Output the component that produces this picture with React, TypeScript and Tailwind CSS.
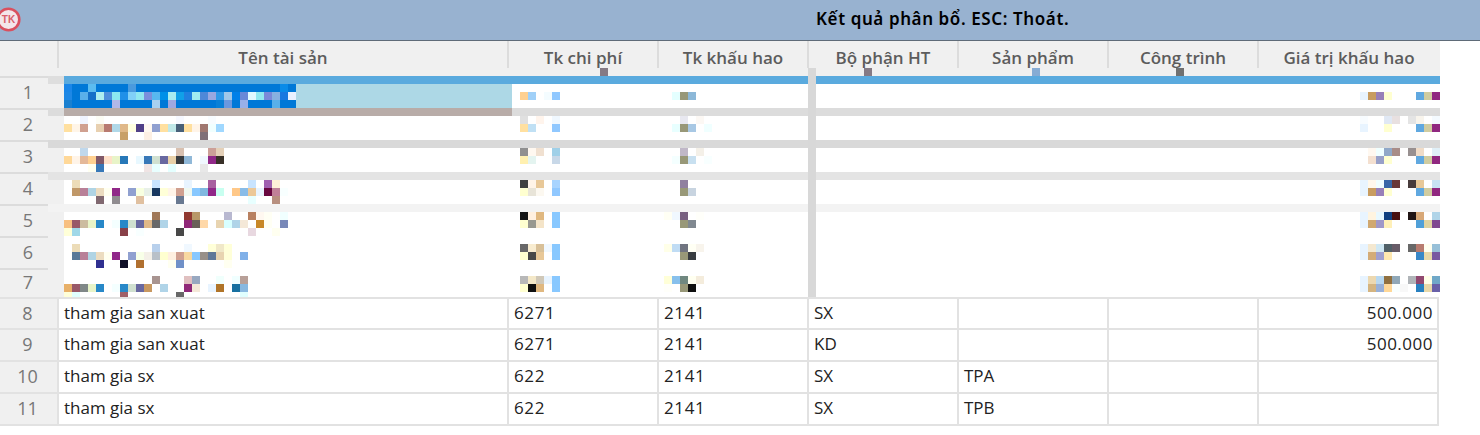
const B = '#0078d7';
const bl = (n: number) => Array(n).fill(B).join(' ');

// [x, y, colours] one run of 8px mosaic cells, "-" leaves a cell empty
const cells: [number, number, string][] = [
  // Tên tài sản
  [64, 84, `#1a86e8 ${bl(2)} #5bbcf0 ${bl(4)} #4a9ade ${bl(18)} #0a8be8 ${B}`],
  [64, 92, `#1e88e5 ${B} #5ab0ea #1570c8 #aeeef0 #4f8fdc #8ce8f0 #2090e8 #80d0f8 #90e8f0 #7a8fdc #58b8f0 #0090e8 #a8ecf0 #10a0e8 #2080e0 #a0ecf0 #4f88d8 #98a8e0 #2f9ae8 #a0c8e8 #0080e8 #6888d8 #e0f8ff #90e8f0 #7a88d8 #88b0e0 #1a78e0 #e8f0ff`],
  [64, 100, `#1a80d0 ${bl(5)} #b0b8e8 ${bl(4)} #a8d0f0 ${B} #a0a8e0 ${bl(5)} #0a80d7 #6a98e0 ${B} #98b0e8 ${bl(3)} #58b0ea ${bl(2)}`],
  [64, 116, '- - #f0f4ff - #fcfcf4 - - - - - - - - - #f6f8ff - - - #f8fcff'],
  [64, 124, '#ffe0a0 #fff5e8 #d0a090 - #e8d0b0 #b87a70 #b0d8e8 #e0b888 #ffffe0 #504088 #fff8f0 #90a0d0 #ffe0a0 #c0e8e8 #486078 #ffe0a0 #fff4e8 #a07870 #f0ffff #a0d8ff'],
  [64, 132, '- - - - - - - #c8a068 - - #fdf0e4 - - - - - - #807078'],
  [64, 148, '- - #c0d8ec - - - - - - - - - - - #d8c0b0 - - - #cca098 #e4d0b8'],
  [64, 156, '#ffd898 #fff4e8 #e4b898 #ffd090 #805868 #ffe0c8 #e8f4c8 #2878b8 - #e8f8ff #3878b8 #d0e0d0 #6868a0 #e8d0a8 #383c40 #90b8d8 - #f0f8ff #902888 #383028'],
  [64, 164, '- - - #fffff0 #3878b8 - - - - - #f0e4e4 #e8ffff - #e4ffff - - - #e8e8e8'],
  [64, 180, '- #ecdcb8 - - - - - - - - - #c8e4ff - - - #e8f4ff - - #a860a0 - - - - #c8e4ff - #a060b0 #fff0d8'],
  [64, 188, '- #c09868 #b88098 #b0d4e4 #ecdcc0 #fffff0 #902888 - #90a0d0 #f8ffe0 #e8f0e8 #183860 #ffffd8 #fff4e8 #d0a090 #f0f8f0 #88c8ff #80b8e0 #902888 #c8fff0 - #ffc888 #88bce8 #ecc898 #e8f4ff #680840 #c08098 #f8ffff'],
  [64, 196, '- - - - #806870 - #908c90 - - #e0c0a0 - - - - #687890 - - - - - - - - #e8ffff - - #b89080'],
  [64, 212, '- - - - - - - - - - - #a07858 - - - #903830 #b89868 - - - #b8b8d0 - - #b88060 #fff8f0 #fffff4 - #f0ffff'],
  [64, 220, '#f8c080 #985868 #ccbca0 #e8f4c8 #2888c8 - #f4ffff #2888c8 #d0e0d0 #6868a0 #e0b888 #686868 #b0d4e8 - - #902878 #686058 #ffd8a8 - #e8d4b0 #d8ffff #b0d4e8 #f4e8d8 - #c88828 #fffff4 - #7888b8'],
  [64, 228, '#ffffd8 #a0d8e8 - - - - - #884048 - #f8ffff - - - - #484848 - - - - - - - - #e8d8e0 - - #fffff0'],
  [64, 244, '- #ecdcb8 - - - - - - - - - #b8d0ec - - - #f0f8ff - - #ffffd8 #f0e8c8 #ffffd8'],
  [64, 252, '- #587898 #b88098 #b0d4e4 #ecdcc0 #fffff0 #902888 - #90a0d0 #f8ffe8 #f4f0e8 #b8c0c8 #ffffd0 #fff0e0 #d0a090 #f8d8a0 #88c8ff #989088 #607898 #e8d4b0 #ffffd8 - #80b0e8'],
  [64, 260, '- - - - #303090 - - #101028 - #b07030 - - - #fffff0 #7090c8 - - - - - #fffff0'],
  [64, 276, '- - - - - - - - - - - #a89490 - - - #e0c0c0 #98a8c0 - - #f0fffc - #f0ffff #b8a098'],
  [64, 284, '#e8b068 #985868 #808888 #e8f4c8 #2888c8 - #f4ffff #2888c8 #d0e0d0 #6868a0 #c89860 - #b0d4e8 - - #902878 #f4e8d8 - #e8f4ff #b07428 - #1870a0 #88b8e0'],
  [64, 292, '#ffffd8 #e0ffff - - - - - #a06068 - - - - - - #686868 - - - - - - - #e0ffff'],
  // Tk chi phí
  [520, 92, '#ffd090 #a0d0f8 - #f4fcff #90c8ff'],
  [520, 116, '#e0e0e0 - #fff4ec - #f0f8ff'],
  [520, 124, '#ffe0a0 #c0e0f4 - - #90c8ff'],
  [520, 148, '#909090 #fff8f0 #f0e0d0 - #a0d0e8'],
  [520, 156, '#fff0b0 #e4f4f0 - - #c8d8e8'],
  [520, 180, '#404040 #fff4e8 #e8c898 - #a8d4ff'],
  [520, 188, '#ffffd0 #e8e4d8 #fcf8f0 - #90c8ff'],
  [520, 212, '#141414 #fff0e0 #e0b880 - #88c8ff'],
  [520, 220, '#ffffd0 #989890 #f4e4c8 - #88c8ff'],
  [520, 244, '#686868 #f8ecd0 #d8c098 #f0f8ff #88c8ff'],
  [520, 252, '#ffffd0 #484848 #e8c898 - #88c8ff'],
  [520, 276, '#b8b8b8 #f4e8c8 #d0c8b8 #e8f4ff #88c8ff'],
  [520, 284, '#ffffd0 #101010 #e0b880 - #88c8ff'],
  // Tk khấu hao
  [672, 92, '#e4ffff #989878 #8cb8d8'],
  [672, 116, '- #e8e8f0 - #fcf8f4'],
  [672, 124, '#e8ffff #989878 #a8c8e4 - #f0ffff'],
  [672, 148, '- #c0b8c8 - #f4f0e8'],
  [672, 156, '#f4ffff #989878 #c8e0f0 - #f8ffff'],
  [672, 180, '- #9080a0'],
  [672, 188, '- #989878 #c8d4e0'],
  [664, 212, '#fffff4 #f0f8ff #786080 - #fffffa'],
  [672, 220, '- #989878 #808890'],
  [664, 244, '#ffffe8 #c0dcf4 #707480 #fffff4 #f8f4ec'],
  [672, 252, '- #989878 #383c40'],
  [664, 276, '#ffffd8 #88c0ec #708880 #fffff0 #f4ecdc'],
  [664, 284, '#fffffa - #989878 #101010'],
  // Giá trị khấu hao
  [1360, 92, '#e8f4ff #c89c60 #9880b8 #ffffd0 - - - #60a8e0 #d0cca0 #902880'],
  [1360, 116, '#f8fcff - - #e0e8f4 #e8e0e0 - #e4e4e4 #f8f4ec - #f4faff'],
  [1360, 124, '#e8f4ff - - #ffffd0 - - - #60a8e0 #d0cca0 #902880'],
  [1360, 148, '- #fff8f0 #f0ffff #90a8c8 #a88c88 - #989090 #f0dcc8 - #e0f0f8'],
  [1360, 156, '- #f4e0d0 #98a0c8 #ffffd0 - - - #60a8e0 #d0cca0 #902880'],
  [1360, 180, '#e8f4ff #fff8ec #f0ffff #3868a8 #683838 - #483c3c #e8c898 - #c8e4f4'],
  [1360, 188, '#e8f4ff #c89c60 #9880b8 #ffffd0 - - - #60a8e0 #d0cca0 #902880'],
  [1360, 212, '#e8f4ff #fff4e0 #e8f8ff #104080 #481010 - #201414 #d8a878 - #b0d4e8'],
  [1360, 220, '#e8f4ff #d0a870 #a098c8 #fff0b8 - - - #50a0d8 #e0d4a0 #804890'],
  [1360, 244, '#e8f4ff #f4e8d0 #d0e8f4 #506068 #685c68 - #686868 #b87c70 #fffff0 #98c0d8'],
  [1360, 252, '#e8f4ff #d4ac78 #a0a0d0 #ffe8b0 - - - #3888c8 #e8d8a8 #7858a0'],
  [1360, 276, '#e8f4ff #ecd8b0 #b8d8f0 #907040 #90a8b8 - #b0b4b8 #904870 #ffffe8 #70a8c8'],
  [1360, 284, '#e8f4ff #d4b480 #98b0d8 #ffd898 #f8ffff #f8f8f8 - #2880c0 #e8d8a8 #6860a8'],
];

// the blurred part of the grid, from the tick strip under the header down to row 7
const Mosaic = () => (
  <svg width={1392} height={229} viewBox="48 68 1392 229" shapeRendering="crispEdges" className="block shrink-0">
    <rect x={48} y={68} width={1392} height={229} fill="#ffffff" />
    <rect x={48} y={68} width={1392} height={8} fill="#f0f0f0" />
    <rect x={48} y={76} width={16} height={221} fill="#f0f0f0" />
    <rect x={48} y={76} width={16} height={8} fill="#dedede" />
    <rect x={64} y={76} width={1376} height={8} fill="#5aaade" />
    <rect x={296} y={84} width={216} height={24} fill="#add8e6" />
    <rect x={48} y={108} width={1392} height={8} fill="#dcdcdc" />
    <rect x={64} y={108} width={448} height={8} fill="#b8aca8" />
    <rect x={48} y={140} width={1392} height={8} fill="#d9d9d9" />
    <rect x={48} y={172} width={1392} height={8} fill="#e4e4e4" />
    <rect x={48} y={204} width={1392} height={8} fill="#f3f3f3" />
    {cells.map(([x, y, run]) =>
      run.split(' ').map((c, i) =>
        c === '-' ? null : <rect key={`${x}-${y}-${i}`} x={x + i * 8} y={y} width={8} height={8} fill={c} />
      )
    )}
    <rect x={808} y={68} width={8} height={229} fill="#d8d8d8" />
    <rect x={600} y={68} width={8} height={8} fill="#857a85" />
    <rect x={864} y={68} width={8} height={8} fill="#857a85" />
    <rect x={1032} y={68} width={8} height={8} fill="#86acd4" />
    <rect x={1176} y={68} width={8} height={8} fill="#707070" />
  </svg>
);

const columns = ['Tên tài sản', 'Tk chi phí', 'Tk khấu hao', 'Bộ phận HT', 'Sản phẩm', 'Công trình', 'Giá trị khấu hao'];

const rows = [
  { no: 8, vals: ['tham gia san xuat', '6271', '2141', 'SX', '', '', '500.000'] },
  { no: 9, vals: ['tham gia san xuat', '6271', '2141', 'KD', '', '', '500.000'] },
  { no: 10, vals: ['tham gia sx', '622', '2141', 'SX', 'TPA', '', ''] },
  { no: 11, vals: ['tham gia sx', '622', '2141', 'SX', 'TPB', '', ''] },
];

const gridCols = 'grid w-[1439px] grid-cols-[59px_450px_150px_150px_150px_150px_150px_180px]';

const Logo = () => (
  <svg width={25} height={25} viewBox="0 0 25 25" className="-ml-1 -mt-px shrink-0">
    <circle cx={12.5} cy={12.5} r={10.8} fill="#f4e6ea" stroke="#d9505f" strokeWidth={2.6} />
    <text x={12.5} y={16} textAnchor="middle" fontSize={10} fontWeight={700} fill="#d9606c" fontFamily="'Liberation Sans', sans-serif">
      TK
    </text>
  </svg>
);

export default function App() {
  return (
    <div className="w-[1480px] h-[435px] overflow-hidden bg-white font-['Open_Sans','Noto_Sans',sans-serif]">
      <div className="flex h-[41px] items-center border-b border-[#5f6b78] bg-[#98b2d0] pb-px">
        <Logo />
        <span className="-mt-0.5 ml-[795px] font-['Noto_Sans',sans-serif] text-[17px] font-semibold tracking-[0.6px] text-black">
          Kết quả phân bổ. ESC: Thoát.
        </span>
      </div>

      <div className="w-[1440px] bg-[#f0f0f0]">
        <div className={gridCols}>
          <div className="h-[27px] border-r-2 border-[#dcdcdc]" />
          {columns.map((col, i) => (
            <div
              key={col}
              className={`h-[27px] pt-[7px] text-center text-[17px] leading-[20px] font-semibold text-[#5c5c5c] ${i < 6 ? 'border-r-2 border-[#dcdcdc]' : ''}`}
            >
              {col}
            </div>
          ))}
        </div>
      </div>

      <div className="flex w-[1440px]">
        <div className="w-12 shrink-0 bg-[#f0f0f0] pt-2 text-[18px] text-[#777]">
          {[1, 2, 3, 4, 5, 6, 7].map(no => (
            <div key={no} className={`${no === 7 ? 'h-[29px]' : 'h-8'} flex items-center justify-center border-t-2 border-[#dcdcdc] pb-0.5 pl-2`}>
              {no}
            </div>
          ))}
        </div>
        <Mosaic />
      </div>

      {rows.map(row => (
        <div key={row.no} className={`${gridCols} ${row.no === 8 ? 'h-[31px]' : 'h-8'} border-t-2 border-[#e2e2e2] text-[17px] leading-[28px] text-[#222]`}>
          <div className="border-r-2 border-[#e2e2e2] bg-[#f0f0f0] pr-0.5 text-center text-[18px] text-[#777]">{row.no}</div>
          {row.vals.map((v, i) => (
            <div
              key={i}
              className={`border-r-2 border-[#e2e2e2] ${i === 6 ? 'pr-1 text-right tracking-[0.5px]' : 'pl-[5px]'} ${i === 1 || i === 2 ? 'tracking-[0.6px]' : ''}`}
            >
              {v}
            </div>
          ))}
        </div>
      ))}
      <div className="h-0.5 w-[1439px] bg-[#e2e2e2]" />
    </div>
  );
}
